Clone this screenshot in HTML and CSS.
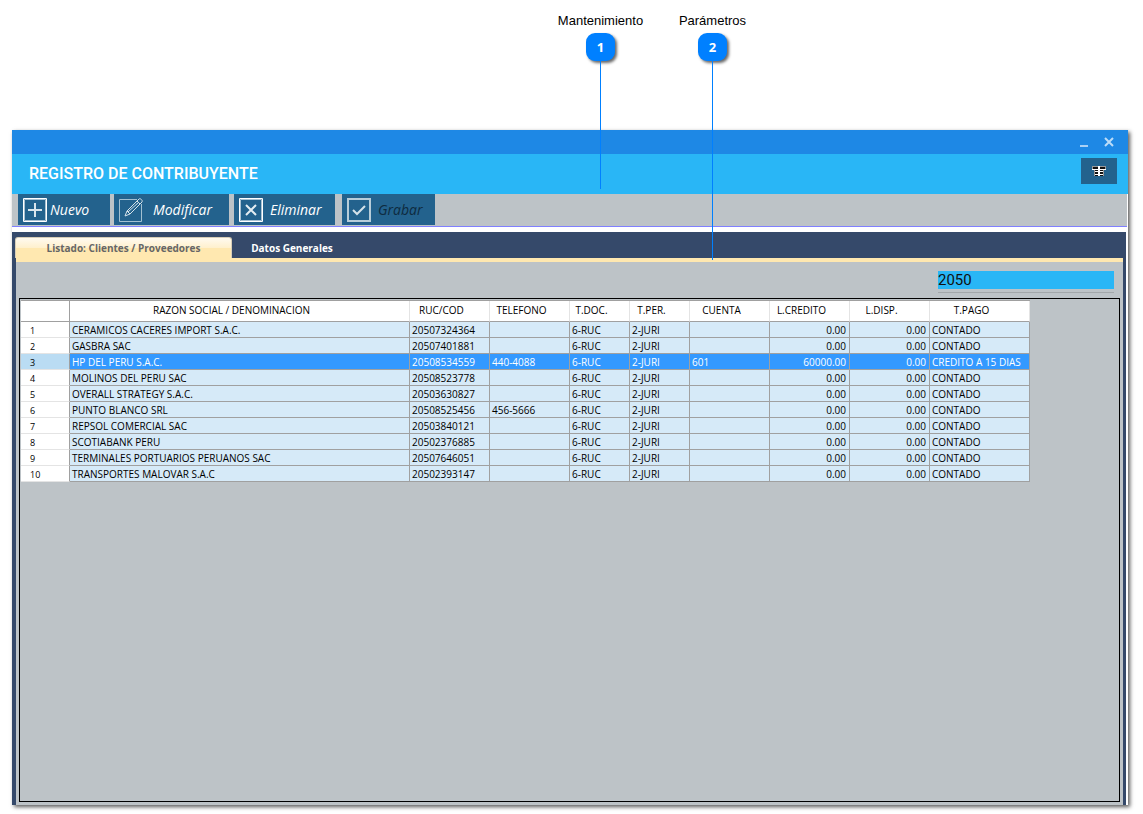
FILE: index.html
```html
<!DOCTYPE html>
<html lang="es">
<head>
<meta charset="utf-8">
<title>Registro de Contribuyente</title>
<link rel="stylesheet" href="styles.css">
</head>
<body>
<main class="window">
  <div class="titlebar">
    <button class="win-btn" aria-label="Minimizar"><svg width="10" height="12" viewBox="0 0 10 12"><path d="M1 10h8" stroke="#a9d0f5" stroke-width="2"/></svg></button>
    <button class="win-btn" aria-label="Cerrar"><svg width="10" height="10" viewBox="0 0 10 10"><path d="M1 1l8 8M9 1l-8 8" stroke="#bcdcf8" stroke-width="2"/></svg></button>
  </div>
  <header class="header">
    <h1 class="title">REGISTRO DE CONTRIBUYENTE</h1>
    <button class="grid-btn" aria-label="Tabla">
      <svg width="14" height="10" viewBox="0 0 14 10" shape-rendering="crispEdges"><path d="M0 0h14v3h-1v1h-1v6H2V4H1V3H0z" fill="#111"/><path d="M0 3h14v1H0zM3 5h8v1H3zM3 8h8v1H3zM6 0h2v10H6z" fill="#fff"/><path d="M0 0h6v1H0zM8 0h6v1H8zM0 1h1v2H0zM13 1h1v2h-1zM2 4h1v6H2zM11 4h1v6h-1z" fill="#999"/></svg>
    </button>
  </header>
  <div class="toolbar">
    <button class="tool nuevo"><svg width="24" height="24" viewBox="0 0 24 24" fill="none"><path d="M.5.5h23v23H.5z" stroke="#fff"/><path d="M1.5 1.5h21v21h-21z" stroke="#a8c1d2" stroke-width="1"/><path d="M12 5v14M5 12h14" stroke="#d9e5ec" stroke-width="2"/></svg><span>Nuevo</span></button>
    <button class="tool modificar"><svg width="24" height="24" viewBox="0 0 24 24" fill="none"><path d="M18 1.5H.5v22h22V6" stroke="#a3c0d1"/><path d="M6 18l2-5L20 1c1-1 4 1 3 3L11 16zM8 13l3 3M18 3l3 3M9 14L20 4" stroke="#d4e2ea"/></svg><span>Modificar</span></button>
    <button class="tool eliminar"><svg width="24" height="24" viewBox="0 0 24 24" fill="none"><path d="M.5.5h23v23H.5z" stroke="#fff"/><path d="M1.5 1.5h21v21h-21z" stroke="#a8c1d2"/><path d="M7 7l10 10M17 7L7 17" stroke="#e4edf2" stroke-width="2"/></svg><span>Eliminar</span></button>
    <button class="tool grabar" disabled><svg width="24" height="24" viewBox="0 0 24 24" fill="none"><path d="M1 1h22v22H1z" stroke="#b8cdd9" stroke-width="2"/><path d="M6 12l4 4 8-8" stroke="#d4e1e9" stroke-width="2"/></svg><span>Grabar</span></button>
  </div>
  <section class="workspace">
    <nav class="tabs" role="tablist">
      <button class="tab active" role="tab" aria-selected="true">Listado: Clientes / Proveedores</button>
      <button class="tab" role="tab" aria-selected="false">Datos Generales</button>
    </nav>
    <div class="panel">
      <div class="filter"><input class="search" type="text" value="2050" aria-label="Buscar"></div>
      <div class="grid">
        <table class="table">
          <colgroup><col class="c-num"><col class="c-name"><col class="c-80"><col class="c-80"><col class="c-60"><col class="c-60"><col class="c-80"><col class="c-80"><col class="c-80"><col class="c-100"></colgroup>
          <thead><tr><th></th><th>RAZON SOCIAL / DENOMINACION</th><th>RUC/COD</th><th>TELEFONO</th><th>T.DOC.</th><th>T.PER.</th><th>CUENTA</th><th>L.CREDITO</th><th>L.DISP.</th><th>T.PAGO</th></tr></thead>
          <tbody>
            <tr><th>1</th><td>CERAMICOS CACERES IMPORT S.A.C.</td><td>20507324364</td><td></td><td>6-RUC</td><td>2-JURI</td><td></td><td class="num">0.00</td><td class="num">0.00</td><td>CONTADO</td></tr>
            <tr><th>2</th><td>GASBRA SAC</td><td>20507401881</td><td></td><td>6-RUC</td><td>2-JURI</td><td></td><td class="num">0.00</td><td class="num">0.00</td><td>CONTADO</td></tr>
            <tr class="selected"><th>3</th><td>HP DEL PERU S.A.C.</td><td>20508534559</td><td>440-4088</td><td>6-RUC</td><td>2-JURI</td><td>601</td><td class="num">60000.00</td><td class="num">0.00</td><td>CREDITO A 15 DIAS</td></tr>
            <tr><th>4</th><td>MOLINOS DEL PERU SAC</td><td>20508523778</td><td></td><td>6-RUC</td><td>2-JURI</td><td></td><td class="num">0.00</td><td class="num">0.00</td><td>CONTADO</td></tr>
            <tr><th>5</th><td>OVERALL STRATEGY S.A.C.</td><td>20503630827</td><td></td><td>6-RUC</td><td>2-JURI</td><td></td><td class="num">0.00</td><td class="num">0.00</td><td>CONTADO</td></tr>
            <tr><th>6</th><td>PUNTO BLANCO SRL</td><td>20508525456</td><td>456-5666</td><td>6-RUC</td><td>2-JURI</td><td></td><td class="num">0.00</td><td class="num">0.00</td><td>CONTADO</td></tr>
            <tr><th>7</th><td>REPSOL COMERCIAL SAC</td><td>20503840121</td><td></td><td>6-RUC</td><td>2-JURI</td><td></td><td class="num">0.00</td><td class="num">0.00</td><td>CONTADO</td></tr>
            <tr><th>8</th><td>SCOTIABANK PERU</td><td>20502376885</td><td></td><td>6-RUC</td><td>2-JURI</td><td></td><td class="num">0.00</td><td class="num">0.00</td><td>CONTADO</td></tr>
            <tr><th>9</th><td>TERMINALES PORTUARIOS PERUANOS SAC</td><td>20507646051</td><td></td><td>6-RUC</td><td>2-JURI</td><td></td><td class="num">0.00</td><td class="num">0.00</td><td>CONTADO</td></tr>
            <tr><th>10</th><td>TRANSPORTES MALOVAR S.A.C</td><td>20502393147</td><td></td><td>6-RUC</td><td>2-JURI</td><td></td><td class="num">0.00</td><td class="num">0.00</td><td>CONTADO</td></tr>
          </tbody>
        </table>
      </div>
    </div>
  </section>
</main>
<div class="callout callout-1"><span class="callout-label">Mantenimiento</span><span class="badge">1</span><span class="stem"></span></div>
<div class="callout callout-2"><span class="callout-label">Parámetros</span><span class="badge">2</span><span class="stem"></span></div>
</body>
</html>
```
FILE: styles.css
```css
* { box-sizing: border-box; }
body {
  margin: 0;
  min-height: 100vh;
  padding: 130px 15px 9px 12px;
  display: flex;
  position: relative;
  background: #fff;
  font-family: "Open Sans", "Noto Sans", sans-serif;
  font-size: 10px;
  color: #000;
}
button { margin: 0; padding: 0; border: 0; background: none; font-family: inherit; }
svg { display: block; flex: none; }

.window {
  flex: 1;
  min-width: 0;
  display: flex;
  flex-direction: column;
  background: #fff;
  box-shadow: 2px 2px 4px rgba(0, 0, 0, 0.65);
}
.titlebar {
  height: 24px;
  padding-right: 14px;
  display: flex;
  align-items: center;
  justify-content: flex-end;
  gap: 15px;
  background: #1e88e5;
}
.header {
  height: 40px;
  padding: 0 11px 0 17px;
  display: flex;
  align-items: center;
  justify-content: space-between;
  background: #29b6f6;
}
.title {
  margin: 0;
  font: 500 16px/24px Roboto, sans-serif;
  color: #fff;
}
.grid-btn {
  width: 36px;
  height: 26px;
  margin-bottom: 6px;
  display: flex;
  align-items: center;
  justify-content: center;
  background: #23628d;
}
.toolbar {
  height: 33px;
  margin-right: 1px;
  padding: 0 6px 1px;
  display: flex;
  background: #bdc3c7;
  border-bottom: 1px solid #8080ff;
}
.tool {
  height: 31px;
  padding-left: 5px;
  display: flex;
  align-items: center;
  gap: 3px;
  background: #23628d;
  color: #fff;
  font: italic 500 14px/20px "Open Sans", sans-serif;
}
.nuevo { width: 92px; margin-right: 4px; }
.modificar { width: 115px; margin-right: 5px; gap: 10px; }
.eliminar { width: 101px; margin-right: 7px; gap: 7px; }
.grabar { width: 93px; gap: 7px; color: #0e2b40; }

.workspace {
  flex: 1;
  margin: 5px 2px 0 0;
  padding: 0 3px 0 4px;
  display: flex;
  flex-direction: column;
  background: #35496a;
}
.tabs {
  height: 26px;
  padding-top: 5px;
  margin-left: -1px;
  display: flex;
}
.tab {
  width: 120px;
  font: 700 10px/20px "Open Sans", sans-serif;
  color: #fff;
}
.tab.active {
  width: 217px;
  border: 1px solid #d8ceb8;
  border-bottom: 0;
  border-radius: 3px 3px 0 0;
  background: linear-gradient(#fffaf0, #fff0cc 50%, #ffe8b0 50%);
  color: #666;
}
.panel {
  flex: 1;
  padding: 9px 3px 3px;
  display: flex;
  flex-direction: column;
  border-top: 4px solid #ffe8b0;
  background: #bdc3c7;
}
.filter {
  height: 27px;
  padding-right: 6px;
  display: flex;
  justify-content: flex-end;
}
.search {
  width: 176px;
  height: 22px;
  padding: 0 0 3px;
  border: 0;
  border-bottom: 1px solid #a2a7aa;
  box-shadow: inset 0 -3px #bdc3c7;
  background: #29b6f6;
  font: 15px/18px Roboto, sans-serif;
  color: #111;
}
.grid {
  flex: 1;
  padding: 1px;
  border: 1px solid #000;
}
.table {
  width: 1009px;
  table-layout: fixed;
  border-collapse: separate;
  border-spacing: 0;
  border-top: 1px solid #a0a0a0;
}
.c-num { width: 49px; }
.c-name { width: 340px; }
.c-60 { width: 60px; }
.c-80 { width: 80px; }
.c-100 { width: 100px; }
.table th, .table td {
  height: 16px;
  padding: 1px 3px 0 2px;
  border-right: 1px solid #a0a0a0;
  border-bottom: 1px solid #a0a0a0;
  font-weight: 500;
  line-height: 14px;
  text-align: left;
  white-space: nowrap;
}
.table td { background: #d6eaf8; }
.table thead th {
  height: 21px;
  padding: 0 16px 2px 0;
  border-right-color: #e4e4e4;
  background: #fff;
  text-align: center;
}
.table thead th:first-child { border-right-color: #a0a0a0; }
.table tbody th {
  padding: 3px 0 0 9px;
  font-size: 9px;
  line-height: 12px;
  border-bottom-color: #e4e4e4;
  background: #fff;
}
.table .num { text-align: right; }
.table .selected td { background: #3399ff; color: #fff; }
.table .selected th { background: #badcf3; }

.callout {
  position: absolute;
  top: 12px;
  display: flex;
  flex-direction: column;
  align-items: center;
  width: 101px;
  font: 13px/18px "Liberation Sans", sans-serif;
}
.callout-1 { left: 550px; height: 177px; }
.callout-2 { left: 662px; height: 248px; }
.badge {
  width: 29px;
  height: 28px;
  margin-top: 3px;
  border-radius: 9px;
  background: #0080ff;
  box-shadow: 2px 2px 3px rgba(0, 0, 0, 0.6);
  color: #fff;
  font: 700 13px/28px "Open Sans", sans-serif;
  text-align: center;
}
.stem { flex: 1; width: 1px; background: #0080ff; }
```
